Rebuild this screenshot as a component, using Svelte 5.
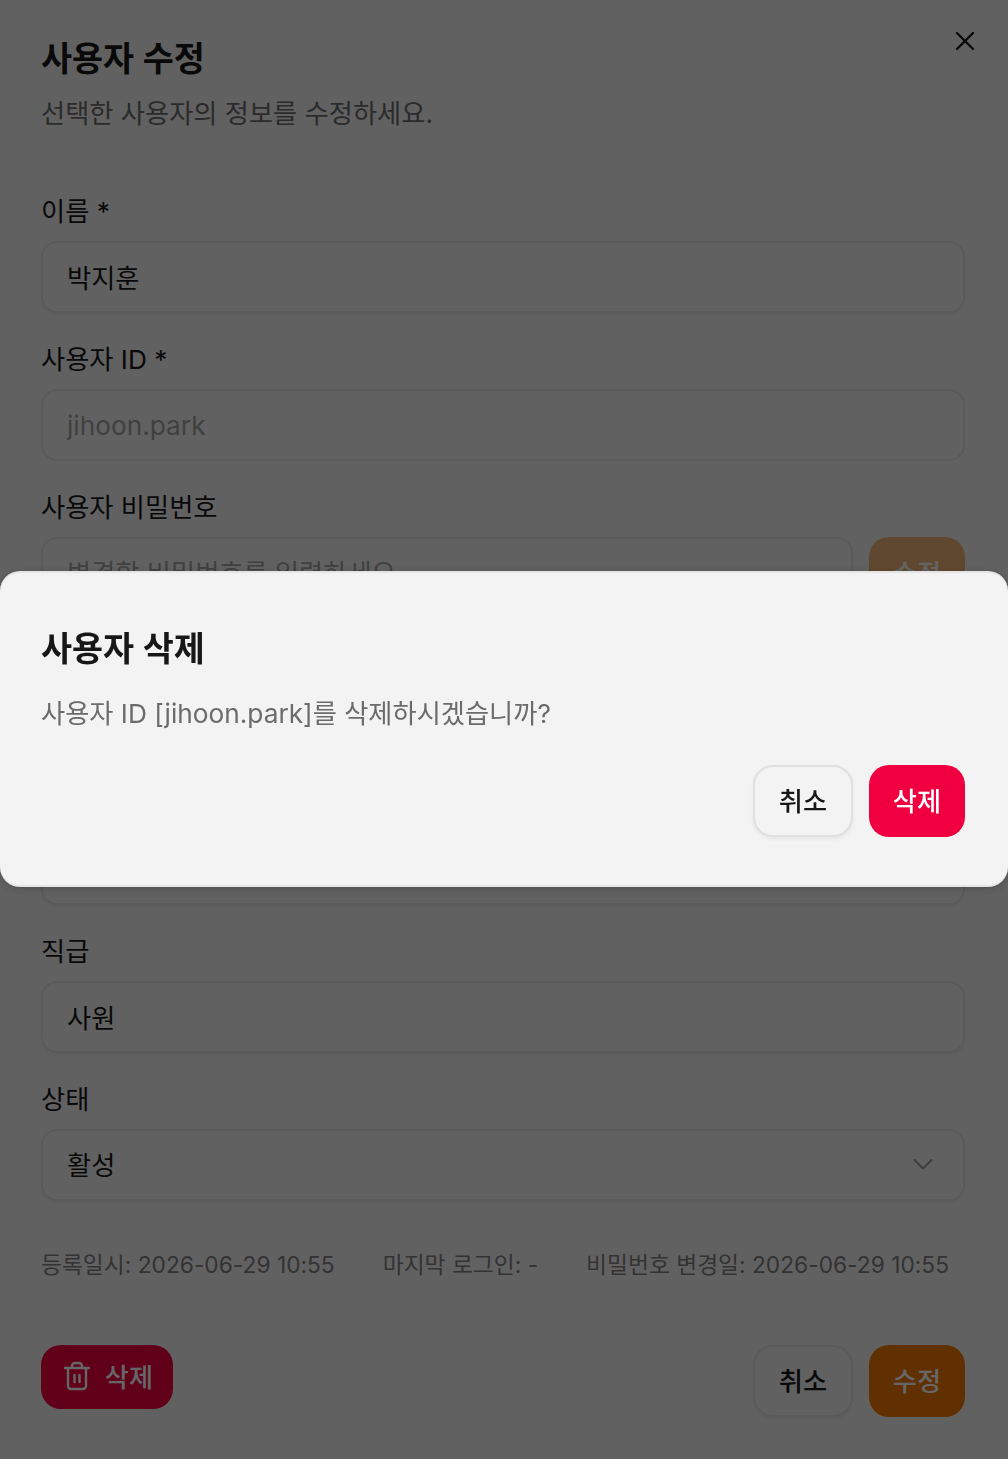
<script>
  const fields = [
    { label: '이름 *', value: '박지훈' },
    { label: '사용자 ID *', value: 'jihoon.park', disabled: true },
    { label: '사용자 비밀번호', placeholder: '변경할 비밀번호를 입력하세요', password: true },
    { label: '', value: '' },
    { label: '', value: '' },
    { label: '직급', value: '사원' }
  ];
</script>

<div class="page">
  <button class="close" aria-label="닫기">
    <svg width="24" height="24" viewBox="0 0 24 24" fill="none" stroke="currentColor" stroke-width="2.4" stroke-linecap="round"><path d="M20 4 4 20M4 4l16 16" /></svg>
  </button>

  <h2>사용자 수정</h2>
  <p class="desc">선택한 사용자의 정보를 수정하세요.</p>

  <div class="form">
    {#each fields as f}
      <div class="field">
        <span class="label">{f.label}</span>
        <div class="row">
          <input class="input" class:disabled={f.disabled} value={f.value ?? ''} placeholder={f.placeholder} disabled={f.disabled} />
          {#if f.password}
            <button class="btn pale">수정</button>
          {/if}
        </div>
      </div>
    {/each}

    <div class="field">
      <span class="label">상태</span>
      <div class="row select-wrap">
        <select class="input">
          <option>활성</option>
        </select>
        <svg width="24" height="24" viewBox="0 0 24 24" fill="none" stroke="currentColor" stroke-width="2" stroke-linecap="round" stroke-linejoin="round"><path d="m3.500 8 8.500 8.500L20.500 8" /></svg>
      </div>
    </div>
  </div>

  <div class="meta">
    <span>등록일시: 2026-06-29 10:55</span>
    <span>마지막 로그인: -</span>
    <span>비밀번호 변경일: 2026-06-29 10:55</span>
  </div>

  <div class="footer">
    <button class="btn danger small">
      <svg width="32" height="32" viewBox="0 0 32 32" fill="none" stroke="currentColor" stroke-width="2.4" stroke-linecap="round" stroke-linejoin="round"><path d="M4 8h24M7 8v18a3 3 0 0 0 3 3h12a3 3 0 0 0 3-3V8M11 8V6a3 3 0 0 1 3-3h4a3 3 0 0 1 3 3v2M13.500 15v7M18.500 15v7" /></svg>
      삭제
    </button>
    <div class="actions">
      <button class="btn outline">취소</button>
      <button class="btn primary">수정</button>
    </div>
  </div>
</div>

<div class="overlay">
  <div class="dialog">
    <h2>사용자 삭제</h2>
    <p class="desc">사용자 ID [jihoon.park]를 삭제하시겠습니까?</p>
    <div class="actions end">
      <button class="btn outline">취소</button>
      <button class="btn danger">삭제</button>
    </div>
  </div>
</div>

<style>
  :global(body) {
    margin: 0;
    background: #f3f3f3;
    font-family: Inter, "Noto Sans CJK KR", sans-serif;
    color: #171717;
  }

  * {
    box-sizing: border-box;
  }

  .page {
    position: relative;
    height: 1459px;
    padding: 39px 43px 0 41px;
  }

  h2 {
    margin: 0;
    font-size: 33.75px;
    line-height: 40px;
    font-weight: 600;
  }

  .desc {
    margin: 15px 0 0;
    font-size: 26.25px;
    line-height: 40px;
    color: #6b6b6b;
  }

  .close {
    position: absolute;
    top: 24px;
    right: 26px;
    width: 34px;
    height: 34px;
    padding: 5px;
    border: 0;
    background: none;
    color: #171717;
  }

  .close svg {
    display: block;
  }

  .form {
    display: flex;
    flex-direction: column;
    gap: 27px;
    margin-top: 58px;
  }

  .field {
    display: flex;
    flex-direction: column;
    gap: 13px;
  }

  .label {
    font-size: 26.25px;
    line-height: 40px;
    height: 36px;
  }

  .row {
    display: flex;
    gap: 16px;
  }

  .input {
    flex: 1;
    min-width: 0;
    height: 72px;
    padding: 0 24px;
    border: 2px solid #e0e0e0;
    border-radius: 16px;
    background: none;
    color: #171717;
    font: inherit;
    font-size: 26.25px;
    box-shadow: 0 2px 4px rgba(0, 0, 0, 0.06);
    appearance: none;
  }

  .input::placeholder {
    color: #a1a1a1;
    opacity: 1;
  }

  .input.disabled {
    color: #a1a1a1;
    box-shadow: none;
  }

  .select-wrap {
    position: relative;
  }

  .select-wrap svg {
    position: absolute;
    top: 23px;
    right: 30px;
    color: #9a9a9a;
  }

  .meta {
    display: flex;
    gap: 48px;
    margin-top: 44px;
    font-size: 22.75px;
    line-height: 40px;
    color: #7f7f7f;
    white-space: nowrap;
  }

  .footer {
    display: flex;
    justify-content: space-between;
    align-items: flex-start;
    margin-top: 60px;
  }

  .actions {
    display: flex;
    gap: 16px;
  }

  .actions.end {
    justify-content: flex-end;
    margin-top: 31px;
  }

  .btn {
    display: inline-flex;
    align-items: center;
    justify-content: center;
    gap: 12px;
    width: 96px;
    height: 72px;
    padding: 0 0 2px;
    border: 0;
    border-radius: 20px;
    font: inherit;
    font-size: 26.25px;
    font-weight: 500;
  }

  .btn.small {
    width: 132px;
    height: 64px;
  }

  .outline {
    width: 100px;
    border: 2px solid #e0e0e0;
    background: #f3f3f3;
    color: #171717;
    box-shadow: 0 2px 4px rgba(0, 0, 0, 0.06);
  }

  .danger {
    background: #f00040;
    color: #fff;
  }

  .primary {
    background: #f07800;
    color: #fff;
  }

  .pale {
    background: #f07800;
    color: #fff;
    opacity: 0.5;
  }

  .overlay {
    position: fixed;
    inset: 0;
    display: flex;
    align-items: center;
    padding-bottom: 1px;
    background: rgba(0, 0, 0, 0.6);
  }

  .dialog {
    width: 100%;
    height: 316px;
    padding: 56px 43px 0 41px;
    background: #f3f3f3;
    border-top: 2px solid #e4e4e4;
    border-bottom: 2px solid #e4e4e4;
    border-radius: 20px;
    box-shadow: 0 2px 8px rgba(0, 0, 0, 0.2);
  }

  .dialog .desc {
    margin-top: 25px;
  }
</style>
